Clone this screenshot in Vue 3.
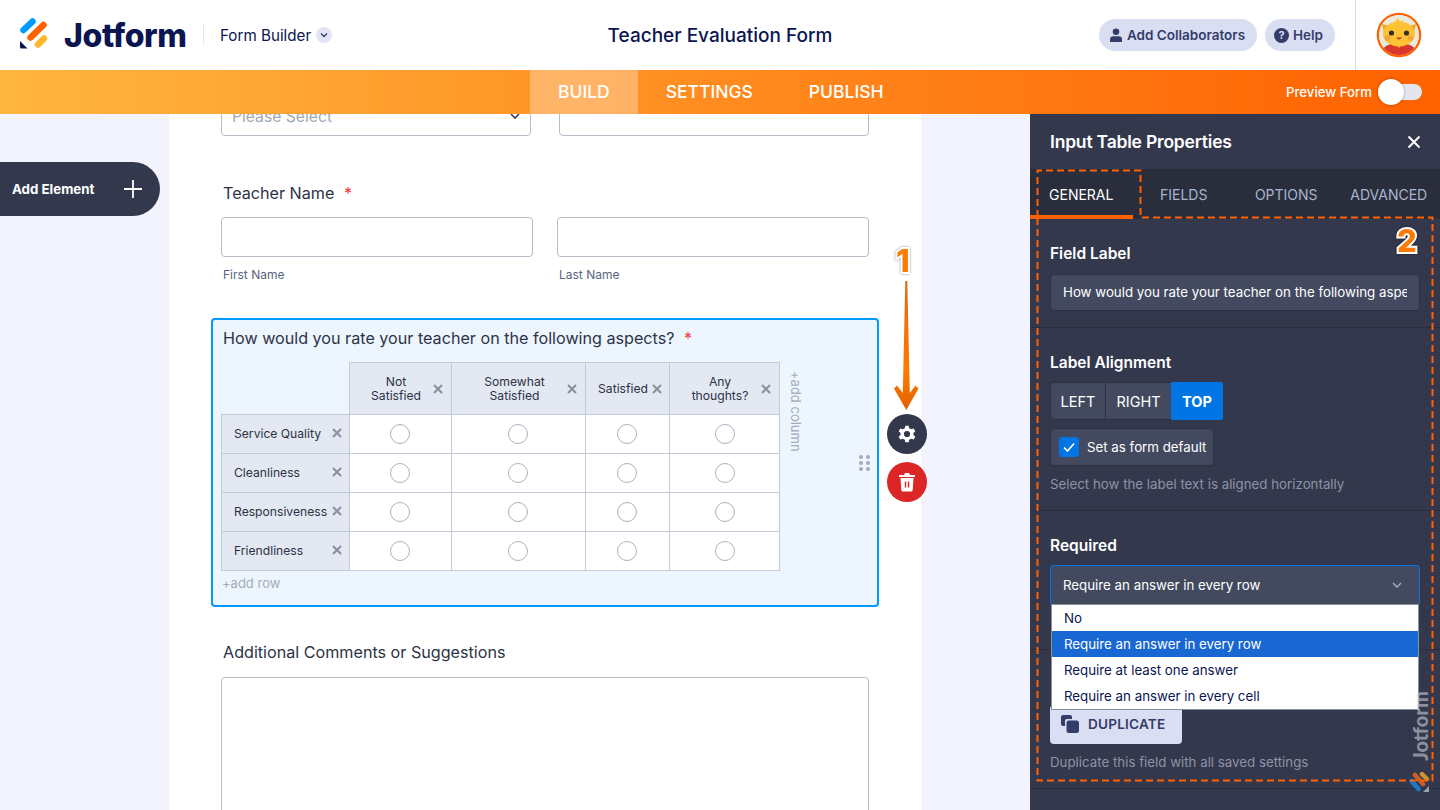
<script setup>
const columns = [
  { label: 'Not Satisfied', cls: 'narrow' },
  { label: 'Somewhat Satisfied', cls: 'mid' },
  { label: 'Satisfied', cls: 'tight' },
  { label: 'Any thoughts?', cls: 'narrow' }
]
const rows = ['Service Quality', 'Cleanliness', 'Responsiveness', 'Friendliness']
const tabs = ['GENERAL', 'FIELDS', 'OPTIONS', 'ADVANCED']
const options = ['No', 'Require an answer in every row', 'Require at least one answer', 'Require an answer in every cell']
</script>

<template>
  <div class="app">
    <header class="top">
      <div class="brand">
        <svg class="logo" width="28" height="31" viewBox="0 0 28 31">
          <line x1="3.500" y1="12" x2="12.500" y2="3.500" stroke="#0099ff" stroke-width="6.500" stroke-linecap="round" />
          <line x1="10.500" y1="19.500" x2="23.500" y2="7" stroke="#ff6100" stroke-width="6.500" stroke-linecap="round" />
          <line x1="18" y1="26.500" x2="24" y2="20.500" stroke="#ffb629" stroke-width="6.500" stroke-linecap="round" />
          <path d="M0 23 L7.500 30.500 H1.500 Q0 30.500 0 29 Z" fill="#0a1551" />
        </svg>
        <span class="wordmark">Jotform</span>
        <span class="sep"></span>
        <span class="builder">Form Builder</span>
        <span class="chev">
          <svg width="10" height="10" viewBox="0 0 10 10"><path d="M2 3.500 L5 6.500 L8 3.500" fill="none" stroke="#343c6a" stroke-width="1.300" /></svg>
        </span>
      </div>
      <div class="title">Teacher Evaluation Form</div>
      <div class="actions">
        <button class="pill collab">
          <svg width="14" height="14" viewBox="0 0 14 14"><circle cx="7" cy="3.800" r="3.300" fill="#343c6a" /><path d="M1 14 V11.500 Q1 8.300 4.500 8.300 H9.500 Q13 8.300 13 11.500 V14 Z" fill="#343c6a" /></svg>
          Add Collaborators
        </button>
        <button class="pill help">
          <span class="q">?</span>
          Help
        </button>
      </div>
      <div class="user">
        <svg width="46" height="46" viewBox="0 0 46 46">
          <defs><clipPath id="av"><circle cx="23" cy="23" r="20" /></clipPath></defs>
          <circle cx="23" cy="23" r="21" fill="#fff" stroke="#ff6100" stroke-width="2.500" />
          <circle cx="23" cy="23" r="20" fill="#e9e9dc" />
          <g clip-path="url(#av)">
            <path d="M3 46 Q5 31 23 31 Q41 31 43 46 Z" fill="#d9372c" />
            <path d="M20 32 H26 L23 36 Z" fill="#f3b33d" />
            <path d="M6 12 L16 15 L9 25 Z M40 12 L30 15 L37 25 Z" fill="#f2a623" />
            <path d="M19 10 L22 6 L24 10 L27 8 L27 13 H19 Z" fill="#ffc233" />
            <ellipse cx="23" cy="22" rx="16" ry="12.500" fill="#ffc233" />
            <circle cx="15.500" cy="21" r="2.600" fill="#33302a" />
            <circle cx="30.500" cy="21" r="2.600" fill="#33302a" />
            <circle cx="11.500" cy="26" r="2.800" fill="#f7a23b" />
            <circle cx="34.500" cy="26" r="2.800" fill="#f7a23b" />
            <path d="M20 25.500 Q23 29.500 26 25.500 Z" fill="#b83a2a" />
          </g>
        </svg>
      </div>
    </header>

    <nav class="nav">
      <div class="nav-tabs">
        <a class="nav-tab on">BUILD</a>
        <a class="nav-tab">SETTINGS</a>
        <a class="nav-tab">PUBLISH</a>
      </div>
      <div class="preview">
        <span>Preview Form</span>
        <span class="toggle"><span class="knob"></span></span>
      </div>
    </nav>

    <main class="main">
      <aside class="rail">
        <button class="add-el">
          <span>Add Element</span>
          <svg width="20" height="20" viewBox="0 0 20 20"><path d="M10 1 V19 M1 10 H19" stroke="#fff" stroke-width="1.800" /></svg>
        </button>
      </aside>

      <section class="sheet">
        <div class="two top-row">
          <div class="field select"><span>Please Select</span>
            <svg width="12" height="12" viewBox="0 0 12 12"><path d="M2 4 L6 8 L10 4" fill="none" stroke="#343c6a" stroke-width="1.600" /></svg>
          </div>
          <div class="field"></div>
        </div>

        <div class="q-label name-label">Teacher Name <em>*</em></div>
        <div class="two name-row">
          <div class="name-col">
            <div class="field"></div>
            <div class="sub">First Name</div>
          </div>
          <div class="name-col">
            <div class="field"></div>
            <div class="sub">Last Name</div>
          </div>
        </div>

        <div class="selected">
          <div class="q-label">How would you rate your teacher on the following aspects? <em>*</em></div>
          <div class="matrix-wrap">
            <div class="matrix">
              <div class="corner"></div>
              <div v-for="c in columns" :key="c.label" class="head" :class="c.cls">
                <span class="head-text">{{ c.label }}</span>
                <svg class="x" width="10" height="10" viewBox="0 0 10 10"><path d="M1 1 L9 9 M9 1 L1 9" stroke="#8a8f9c" stroke-width="2" /></svg>
              </div>
              <template v-for="r in rows" :key="r">
                <div class="row-head">
                  <span>{{ r }}</span>
                  <svg class="x" width="10" height="10" viewBox="0 0 10 10"><path d="M1 1 L9 9 M9 1 L1 9" stroke="#8a8f9c" stroke-width="2" /></svg>
                </div>
                <div v-for="c in columns" :key="c.label" class="cell"><span class="radio"></span></div>
              </template>
            </div>
            <div class="add-col">+add column</div>
          </div>
          <div class="add-row">+add row</div>

          <div class="grip"><i v-for="n in 6" :key="n"></i></div>
          <button class="round gear">
            <svg width="20" height="20" viewBox="0 0 24 24"><path fill="#fff" fill-rule="evenodd" d="M10 2 H14 L14.600 5 Q16 5.500 17.100 6.300 L20 5.300 L22 8.700 L19.700 10.700 Q19.900 12 19.700 13.300 L22 15.300 L20 18.700 L17.100 17.700 Q16 18.500 14.600 19 L14 22 H10 L9.400 19 Q8 18.500 6.900 17.700 L4 18.700 L2 15.300 L4.300 13.300 Q4.100 12 4.300 10.700 L2 8.700 L4 5.300 L6.900 6.300 Q8 5.500 9.400 5 Z M12 8.300 A3.700 3.700 0 1 0 12 15.700 A3.700 3.700 0 1 0 12 8.300 Z" /></svg>
          </button>
          <button class="round trash">
            <svg width="18" height="20" viewBox="0 0 18 20"><path fill="#fff" d="M1 3 H6 L7 1 H11 L12 3 H17 V5 H1 Z" /><path fill="#fff" fill-rule="evenodd" d="M2.500 6 H15.500 L14.700 18 Q14.600 19.500 13 19.500 H5 Q3.400 19.500 3.300 18 Z M6.800 9.500 V15.500 H8.200 V9.500 Z M9.800 9.500 V15.500 H11.200 V9.500 Z" /></svg>
          </button>
        </div>

        <div class="q-label comment-label">Additional Comments or Suggestions</div>
        <div class="textarea"></div>
      </section>

      <aside class="panel">
        <div class="panel-head">
          <h2>Input Table Properties</h2>
          <svg width="14" height="14" viewBox="0 0 14 14"><path d="M1.500 1.500 L12.500 12.500 M12.500 1.500 L1.500 12.500" stroke="#fff" stroke-width="2" /></svg>
        </div>
        <div class="tabs">
          <div v-for="(t, i) in tabs" :key="t" class="tab" :class="{ active: i === 0 }">{{ t }}</div>
        </div>

        <div class="sec sec-label">
          <h3>Field Label</h3>
          <div class="text-input"><span>How would you rate your teacher on the following aspects?</span></div>
        </div>

        <div class="sec sec-align">
          <h3>Label Alignment</h3>
          <div class="seg">
            <span class="seg-b left">LEFT</span>
            <span class="seg-b right">RIGHT</span>
            <span class="seg-b on">TOP</span>
          </div>
          <div class="check">
            <span class="box"><svg width="14" height="14" viewBox="0 0 14 14"><path d="M2 7.500 L5.500 11 L12 3.500" fill="none" stroke="#fff" stroke-width="1.700" /></svg></span>
            Set as form default
          </div>
          <p class="hint">Select how the label text is aligned horizontally</p>
        </div>

        <div class="sec sec-req">
          <h3>Required</h3>
          <div class="req-select">
            <span>Require an answer in every row</span>
            <svg width="12" height="12" viewBox="0 0 12 12"><path d="M2 4 L6 8 L10 4" fill="none" stroke="#aab0c4" stroke-width="1.300" /></svg>
          </div>
        </div>

        <div class="sec sec-dup">
          <button class="dup">
            <svg width="20" height="20" viewBox="0 0 20 20"><path d="M3 1 H10 Q12 1 12 3 V5 H7 Q5 5 5 7 V12 H3 Q1 12 1 10 V3 Q1 1 3 1 Z" fill="#343c6a" /><rect x="6.500" y="6.500" width="12.500" height="12.500" rx="2.500" fill="#343c6a" /></svg>
            DUPLICATE
          </button>
          <p class="hint">Duplicate this field with all saved settings</p>
        </div>

        <ul class="menu">
          <li v-for="(o, i) in options" :key="o" :class="{ sel: i === 1 }">{{ o }}</li>
        </ul>

        <div class="mark"><span>Jotform</span></div>
        <svg class="mark-logo" width="22" height="22" viewBox="0 0 22 22">
          <line x1="2.500" y1="9" x2="9.500" y2="17" stroke="#1e78c8" stroke-width="4.500" stroke-linecap="round" />
          <line x1="6" y1="3" x2="14" y2="12" stroke="#c8602a" stroke-width="4.500" stroke-linecap="round" />
          <line x1="13" y1="2" x2="18" y2="7" stroke="#c8962e" stroke-width="4.500" stroke-linecap="round" />
          <path d="M20 14 V20 H14 Z" fill="#9aa0ae" />
        </svg>
      </aside>
    </main>

    <svg class="notes" width="1440" height="810" viewBox="0 0 1440 810">
      <defs>
        <linearGradient id="arrowFill" x1="0" y1="0" x2="0" y2="1">
          <stop offset="0" stop-color="#e46a10" />
          <stop offset="0.700" stop-color="#ff7a00" />
          <stop offset="1" stop-color="#e06000" />
        </linearGradient>
      </defs>
      <path d="M1037.500 217 V170.500 H1140.500 V217.500 H1432.500 V780.500 H1037.500 V217" fill="none" stroke="#ff6100" stroke-width="2" stroke-dasharray="7 4" />
      <path d="M905.300 281 H907.300 L909.800 393 L915.500 385.500 L918.500 388.500 L906.300 410 L894 388.500 L897 385.500 L902.800 393 Z" fill="url(#arrowFill)" />
    </svg>
    <span class="num n1">1</span>
    <span class="num n2">2</span>
  </div>
</template>

<style>
html, body { margin: 0; overflow: hidden; }
</style>

<style scoped>
.app {
  position: relative;
  width: 1440px;
  height: 810px;
  overflow: hidden;
  font-family: Inter, "Noto Sans", sans-serif;
  color: #2c3345;
  display: flex;
  flex-direction: column;
}
button { font-family: inherit; border: 0; cursor: pointer; }

.top {
  height: 70px;
  background: #fff;
  display: grid;
  grid-template-columns: 1fr auto 1fr;
  align-items: center;
  position: relative;
  flex: none;
  z-index: 2;
}
.brand { display: flex; align-items: center; padding-left: 20px; }
.logo { margin-right: 16px; margin-top: -4px; flex: none; }
.wordmark {
  font-weight: 800;
  font-size: 32px;
  color: #0a1551;
  letter-spacing: -0.4px;
  width: 124px;
  flex: none;
}
.sep { width: 1px; height: 20px; background: #e3e5f2; margin-left: 15px; margin-right: 16px; flex: none; }
.builder { font-size: 15.200px; color: #0a1551; white-space: nowrap; }
.chev {
  width: 16px; height: 16px; border-radius: 50%; background: #e3e5f5; flex: none;
  display: flex; align-items: center; justify-content: center; margin-left: 5px;
}
.title { font-size: 19px; font-weight: 500; color: #0a1551; }
.actions { position: absolute; right: 105px; top: 19px; display: flex; gap: 8px; }
.pill {
  height: 32px; border-radius: 16px; background: #dadef3; color: #343c6a;
  font-size: 13.500px; font-weight: 600; display: flex; align-items: center; padding: 0;
}
.collab { width: 158px; padding-left: 10px; gap: 4px; }
.help { width: 70px; padding-left: 9px; gap: 4px; }
.q {
  width: 15px; height: 15px; border-radius: 50%; background: #343c6a; color: #dadef3;
  font-size: 11px; font-weight: 700; display: flex; align-items: center; justify-content: center;
}
.user {
  position: absolute; right: 0; top: 0; width: 85px; height: 70px;
  border-left: 1px solid #d8dae9; display: flex; align-items: center; justify-content: center;
  box-sizing: border-box; padding-left: 1px;
}

.nav {
  height: 44px; flex: none; position: relative; z-index: 2;
  background: linear-gradient(90deg, #ffb63f 0%, #ff6100 100%);
  display: flex; justify-content: flex-start;
}
.nav-tabs { display: flex; margin-left: 530px; }
.nav-tab {
  font-size: 17.500px; font-weight: 500; color: #fff; padding: 0 28px 2px;
  display: flex; align-items: center;
}
.nav-tab.on { background: rgba(255, 255, 255, 0.3); }
.preview {
  position: absolute; right: 18px; top: 0; height: 44px; display: flex; align-items: center; gap: 6px;
  color: #fff; font-size: 13.200px; font-weight: 500;
}
.toggle { width: 44px; height: 16px; background: #e3e5ef; border-radius: 8px; position: relative; display: block; }
.knob {
  position: absolute; left: 0; top: -5px; width: 26px; height: 26px; border-radius: 50%;
  background: #fff; box-shadow: 0 0 3px rgba(0, 0, 0, 0.35);
}

.main { flex: 1; display: flex; background: #f3f3fe; min-height: 0; position: relative; z-index: 1; }
.rail { width: 169px; flex: none; padding-top: 48px; box-sizing: border-box; }
.add-el {
  width: 160px; height: 54px; background: #33384d; color: #fff; border-radius: 0 27px 27px 0;
  display: flex; align-items: center; justify-content: space-between; padding: 0 17px 0 12px;
  font-size: 13.300px; font-weight: 700; box-sizing: border-box;
}
.sheet {
  width: 752px; flex: none; background: #fff; padding-left: 52px; padding-right: 52px; box-sizing: border-box;
  height: 696px;
}
.two { display: flex; justify-content: space-between; }
.field {
  height: 40px; border: 1px solid #b8bdc9; border-radius: 4px; box-sizing: border-box; background: #fff;
}
.top-row { margin-top: -18px; }
.top-row .field { width: 310px; }
.select {
  display: flex; align-items: center; justify-content: space-between; padding: 0 9px 0 10px;
  color: #a0a8b8; font-size: 15.700px;
}
.q-label { font-size: 16.150px; line-height: 20px; color: #2c3345; padding-left: 2px; }
.q-label em { color: #f23a3c; font-style: normal; margin-left: 5px; }
.name-label { margin-top: 47px; }
.name-row { margin-top: 14px; }
.name-col { width: 312px; }
.sub { margin-top: 10px; font-size: 12px; line-height: 16px; color: #57647e; padding-left: 2px; }
.selected {
  position: relative; margin: 35px 0 0 -10px; width: 668px; height: 289px; box-sizing: border-box;
  border: 2px solid #0099ff; border-radius: 4px; background: #edf6ff; padding: 8px 0 0 8px;
}
.matrix-wrap { display: flex; margin-top: 14px; }
.matrix {
  display: grid;
  grid-template-columns: 129px 102px 134px 84px 110px;
  grid-template-rows: 53px repeat(4, 39px);
  width: 559px;
  flex: none;
}
.corner { border-right: 1px solid #c3cad8; border-bottom: 1px solid #c3cad8; }
.head {
  background: #e3e8f2; border: 1px solid #c3cad8; border-left: 0; display: flex; align-items: center;
  padding: 0 8px; font-size: 12.150px; line-height: 14px; color: #2c3345; text-align: center;
}
.head-text { flex: 1; }
.head.narrow .head-text { padding: 0 7px 0 8px; }
.head.mid .head-text { padding: 0 14px 0 16px; }
.head.tight { padding-right: 7px; }
.row-head {
  background: #e3e8f2; border: 1px solid #c3cad8; border-top: 0; display: flex; align-items: center;
  justify-content: space-between; padding: 0 7px 2px 12px; font-size: 12.150px; white-space: nowrap;
}
.x { flex: none; }
.cell {
  background: #fff; border-right: 1px solid #c3cad8; border-bottom: 1px solid #c3cad8; padding-right: 2px;
  display: flex; align-items: center; justify-content: center;
}
.cell:nth-child(5n) { padding-right: 0; }
.radio { width: 18px; height: 18px; border: 1px solid #aab1c0; border-radius: 50%; background: #fff; }
.add-col {
  writing-mode: vertical-rl; white-space: nowrap; font-size: 13px; color: #a4abbb; margin: 9px 0 0 8px; line-height: 16px;
  align-self: flex-start;
}
.add-row { margin-top: 4px; font-size: 13px; line-height: 16px; color: #a4abbb; padding-left: 1px; }
.grip {
  position: absolute; left: 646px; top: 135px; display: grid; grid-template-columns: 4px 4px; gap: 2px 3px;
}
.grip i { width: 4px; height: 4px; border-radius: 50%; background: #a4abbb; display: block; }
.round {
  position: absolute; left: 674px; width: 40px; height: 40px; border-radius: 50%; padding: 0;
  display: flex; align-items: center; justify-content: center;
}
.gear { top: 94px; background: #33384d; }
.trash { top: 142px; background: #dc2626; }
.comment-label { margin-top: 35px; }
.textarea { margin-top: 15px; height: 200px; border: 1px solid #b8bdc9; border-radius: 4px; background: #fff; }

.panel {
  position: absolute; right: 0; top: 0; bottom: 0; width: 410px; background: #33384d; color: #fff;
}
.panel-head {
  height: 55px; display: flex; align-items: center; justify-content: space-between; padding: 0 19px 0 20px;
}
.panel-head h2 { margin: 0; font-size: 17.500px; font-weight: 600; letter-spacing: -0.2px; }
.tabs { height: 50px; display: flex; background: #292d3c; }
.tab {
  flex: 1; display: flex; align-items: center; justify-content: center; font-size: 14px;
  color: #a8b5cc; box-sizing: border-box; padding-top: 1px;
}
.tab.active { color: #fff; border-bottom: 4px solid #ff6100; padding-top: 5px; }
h3 { margin: 0; font-size: 15.500px; font-weight: 600; line-height: 20px; }
.sec { padding: 0 20px; border-bottom: 1px solid #292d3c; box-sizing: border-box; }
.sec-label { height: 109px; padding-top: 25px; }
.text-input {
  margin-top: 10px; height: 37px; background: #434a60; border: 1px solid #2c3040; border-radius: 4px;
  box-sizing: border-box; padding: 0 12px 2px; font-size: 13.300px; display: flex; align-items: center; overflow: hidden;
}
.text-input span { white-space: nowrap; overflow: hidden; width: 100%; display: block; line-height: 20px; }
.sec-align { height: 183px; padding-top: 25px; }
.seg { display: flex; margin-top: 9px; height: 38px; font-size: 14.500px; }
.seg-b {
  display: flex; align-items: center; justify-content: center; background: #434a60; box-sizing: border-box;
  border: 1px solid #2c3040;
}
.seg-b.left { width: 56px; border-radius: 4px 0 0 4px; }
.seg-b.right { width: 65px; border-left: 0; border-right: 0; }
.seg-b.on { width: 52px; background: #0075e3; border-color: #0075e3; font-weight: 700; border-radius: 0 2px 2px 0; }
.check {
  margin-top: 8px; width: 164px; height: 38px; background: #434a60; border: 1px solid #2c3040; border-radius: 4px;
  box-sizing: border-box; display: flex; align-items: center; padding-left: 8px; gap: 8px; font-size: 13.300px;
}
.box {
  width: 20px; height: 20px; border-radius: 3px; background: #0075e3; display: flex; align-items: center; justify-content: center;
}
.hint { margin: 9px 0 0; font-size: 13.300px; line-height: 18px; color: #8d93a5; }
.sec-req { height: 139px; padding-top: 25px; }
.req-select {
  margin-top: 9px; height: 39px; background: #434a60; border: 1px solid #0075e3; border-bottom-color: #434a60; border-radius: 4px 4px 0 0;
  box-sizing: border-box; padding: 0 16px 0 12px; display: flex; align-items: center; justify-content: space-between;
  font-size: 13.300px;
}
.sec-dup { height: 139px; padding-top: 55px; }
.dup {
  width: 132px; height: 39px; background: #dadef3; color: #343c6a; font-size: 13.600px; font-weight: 600; border-radius: 4px;
  display: flex; align-items: center; padding: 0 0 2px 10px; gap: 8px; box-sizing: border-box; letter-spacing: 0.2px;
}
.sec-dup .hint { margin-top: 9px; }
.menu {
  position: absolute; left: 22px; top: 491px; width: 366px; margin: 0; padding: 0; list-style: none;
  background: #fff; color: #0a1551; font-size: 13.300px; outline: 1px solid #8a8f9c;
}
.menu li { height: 26px; display: flex; align-items: center; padding-left: 12px; box-sizing: border-box; }
.menu li.sel { background: #1967d2; color: #fff; }
.mark {
  position: absolute; left: 380px; top: 578px; width: 20px; height: 68px; display: flex; align-items: center; justify-content: center;
  color: rgba(200, 205, 215, 0.6); font-weight: 900; font-size: 20px; font-family: Lato, sans-serif;
}
.mark span { display: block; transform: rotate(-90deg); white-space: nowrap; }
.mark-logo { position: absolute; left: 379px; top: 658px; }

.notes { position: absolute; left: 0; top: 0; pointer-events: none; z-index: 3; }
.num {
  position: absolute; font-family: Inter, sans-serif; font-weight: 800; font-size: 31px; line-height: 30px; z-index: 3;
  color: #ff7a00; -webkit-text-stroke: 4px #fff; paint-order: stroke fill;
  filter: drop-shadow(0 0 1px rgba(0, 0, 0, 0.45));
}
.n1 { left: 896px; top: 246px; }
.n2 { left: 1397px; top: 226px; }
</style>
